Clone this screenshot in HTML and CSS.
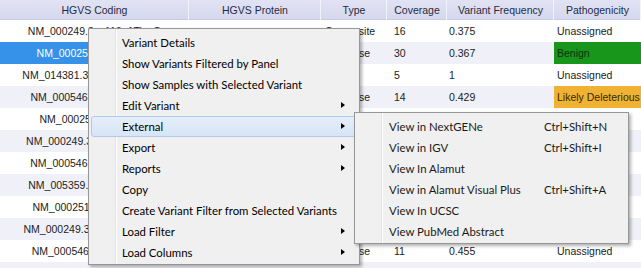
FILE: index.html
```html
<!DOCTYPE html>
<html lang="en">
  <head>
    <meta charset="UTF-8" />
    <meta name="viewport" content="width=device-width, initial-scale=1.0" />
    <title>Variants</title>
    <link rel="stylesheet" href="styles.css">
  </head>
  <body>
    <div class="Grid">
      <table class="Variants">
        <colgroup>
          <col class="c-coding" />
          <col class="c-protein" />
          <col class="c-type" />
          <col class="c-coverage" />
          <col class="c-freq" />
          <col class="c-path" />
        </colgroup>
        <thead>
          <tr>
            <th>HGVS Coding</th>
            <th>HGVS Protein</th>
            <th>Type</th>
            <th>Coverage</th>
            <th>Variant Frequency</th>
            <th>Pathogenicity</th>
          </tr>
        </thead>
        <tbody>
          <tr>
            <td class="coding">NM_000249.3:c.116+1TinsG</td>
            <td></td>
            <td class="type">Composite</td>
            <td class="num">16</td>
            <td class="freq">0.375</td>
            <td class="path">Unassigned</td>
          </tr>
          <tr class="alt">
            <td class="coding selected">NM_000251.2:c.142A&gt;G</td>
            <td>p.Met1?</td>
            <td class="type">Missense</td>
            <td class="num">30</td>
            <td class="freq">0.367</td>
            <td class="path benign">Benign</td>
          </tr>
          <tr>
            <td class="coding">NM_014381.3:c.204-7delTinsA</td>
            <td></td>
            <td class="type"></td>
            <td class="num">5</td>
            <td class="freq">1</td>
            <td class="path">Unassigned</td>
          </tr>
          <tr class="alt">
            <td class="coding">NM_000546.5:c.14766C&gt;G</td>
            <td>p.Pro72Arg</td>
            <td class="type">Missense</td>
            <td class="num">14</td>
            <td class="freq">0.429</td>
            <td class="path likely">Likely Deleterious</td>
          </tr>
          <tr>
            <td class="coding">NM_000251.2:c.14A&gt;G</td>
            <td></td>
            <td class="type">Missense</td>
            <td class="num">22</td>
            <td class="freq">0.5</td>
            <td class="path">Unassigned</td>
          </tr>
          <tr class="alt">
            <td class="coding">NM_000249.3:c.1321-55A&gt;G</td>
            <td>p.Ile219Val</td>
            <td class="type">Missense</td>
            <td class="num">18</td>
            <td class="freq">0.444</td>
            <td class="path">Unassigned</td>
          </tr>
          <tr>
            <td class="coding">NM_000546.5:c.74+38C&gt;G</td>
            <td>p.Pro72Arg</td>
            <td class="type">Missense</td>
            <td class="num">9</td>
            <td class="freq">1</td>
            <td class="path">Unassigned</td>
          </tr>
          <tr class="alt">
            <td class="coding">NM_005359.5:c.955+12C&gt;T</td>
            <td></td>
            <td class="type">Missense</td>
            <td class="num">12</td>
            <td class="freq">0.417</td>
            <td class="path">Unassigned</td>
          </tr>
          <tr>
            <td class="coding">NM_000251.2:c.23-12C&gt;T</td>
            <td></td>
            <td class="type">Missense</td>
            <td class="num">7</td>
            <td class="freq">0.571</td>
            <td class="path">Unassigned</td>
          </tr>
          <tr class="alt">
            <td class="coding">NM_000249.3:c.1668-119A&gt;G</td>
            <td></td>
            <td class="type">Missense</td>
            <td class="num">10</td>
            <td class="freq">0.6</td>
            <td class="path">Unassigned</td>
          </tr>
          <tr>
            <td class="coding">NM_000546.5:c.11004C&gt;T</td>
            <td>p.Pro72Arg</td>
            <td class="type">Missense</td>
            <td class="num">11</td>
            <td class="freq">0.455</td>
            <td class="path">Unassigned</td>
          </tr>
          <tr class="alt">
            <td class="coding">NM_000249.3:c.1039-8T&gt;A</td>
            <td></td>
            <td class="type">Missense</td>
            <td class="num">8</td>
            <td class="freq">0.5</td>
            <td class="path">Unassigned</td>
          </tr>
        </tbody>
      </table>

      <ul class="Menu ContextMenu">
        <li>Variant Details</li>
        <li>Show Variants Filtered by Panel</li>
        <li>Show Samples with Selected Variant</li>
        <li class="sub">Edit Variant</li>
        <li class="sub open">
          External
          <ul class="Menu SubMenu">
            <li><span>View in NextGENe</span><span class="key">Ctrl+Shift+N</span></li>
            <li><span>View in IGV</span><span class="key">Ctrl+Shift+I</span></li>
            <li><span>View In Alamut</span><span class="key"></span></li>
            <li><span>View in Alamut Visual Plus</span><span class="key">Ctrl+Shift+A</span></li>
            <li><span>View In UCSC</span><span class="key"></span></li>
            <li><span>View PubMed Abstract</span><span class="key"></span></li>
          </ul>
        </li>
        <li class="sub">Export</li>
        <li class="sub">Reports</li>
        <li>Copy</li>
        <li>Create Variant Filter from Selected Variants</li>
        <li class="sub">Load Filter</li>
        <li class="sub">Load Columns</li>
      </ul>
    </div>
  </body>
</html>
```

FILE: styles.css
```css
:root {
  --row-alt: #eff0f8;
  --select: #3592e8;
  --menu-bg: #f0f0f0;
  --menu-border: #979797;
}

body {
  margin: 0;
  overflow: hidden;
  background: #fff;
  font-family: "Liberation Sans", Arial, sans-serif;
}

.Grid {
  position: relative;
  width: 641px;
  height: 268px;
  overflow: hidden;
}

/* table */
.Variants {
  width: 641px;
  border-collapse: collapse;
  border-spacing: 0;
  table-layout: fixed;
  font-size: 10.5px;
  color: #222;
}
.c-coding { width: 189px; }
.c-protein { width: 132px; }
.c-type { width: 66px; }
.c-coverage { width: 60px; }
.c-freq { width: 107px; }
.c-path { width: 87px; }

.Variants thead tr {
  height: 20px;
}
.Variants th {
  padding: 0;
  font-weight: normal;
  color: #1f2b45;
  background: linear-gradient(#e1e3f3, #d5d8ee);
  box-shadow: inset -1px 0 #f3f4fb, inset 0 -1px #c6cae2;
}
.Variants tbody tr {
  height: 22px;
}
.Variants td {
  padding: 0 4px;
  white-space: nowrap;
  overflow: hidden;
}
.Variants tr.alt td {
  background: var(--row-alt);
}
.Variants td.coding {
  text-align: center;
}
.Variants td.type {
  text-align: right;
  padding-right: 17px;
}
.Variants td.num {
  padding-left: 7px;
}
.Variants td.freq {
  padding-left: 2px;
}
.Variants td.path {
  padding-left: 3px;
}
.Variants tr td.selected {
  background: var(--select);
  color: #fff;
}
.Variants tr td.benign {
  background: #17961b;
  color: #0d2f0d;
}
.Variants tr td.likely {
  background: #f0b232;
  color: #3a2800;
}

/* menus */
.Menu {
  position: absolute;
  margin: 0;
  padding: 3px 2px 1px;
  list-style: none;
  border: 1px solid var(--menu-border);
  background: linear-gradient(
    to right,
    var(--menu-bg) 26px,
    #e2e3e3 26px 27px,
    #fff 27px 28px,
    var(--menu-bg) 28px
  );
  box-shadow: 2px 2px 3px rgba(0, 0, 0, 0.3);
  font-family: Lato, "Open Sans", sans-serif;
  font-size: 11.4px;
  color: #000;
}
.Menu li {
  position: relative;
  height: 19px;
  line-height: 19px;
  padding-left: 30px;
  border: 1px solid transparent;
  border-radius: 3px;
  white-space: nowrap;
}

.ContextMenu {
  left: 88px;
  top: 28px;
  width: 266px;
}
.ContextMenu > li.sub::after {
  content: "";
  position: absolute;
  right: 11px;
  top: 6px;
  border-left: 4px solid #000;
  border-top: 3.5px solid transparent;
  border-bottom: 3.5px solid transparent;
}
.ContextMenu > li.open {
  border-color: #aecbec;
  background: linear-gradient(#e6eefa, #d6e5f6);
}

.SubMenu {
  left: 262px;
  top: -5px;
  width: 269px;
  color: #1a1a1a;
}
.SubMenu li {
  display: grid;
  grid-template-columns: 1fr 81px;
  padding-left: 31px;
}
```
